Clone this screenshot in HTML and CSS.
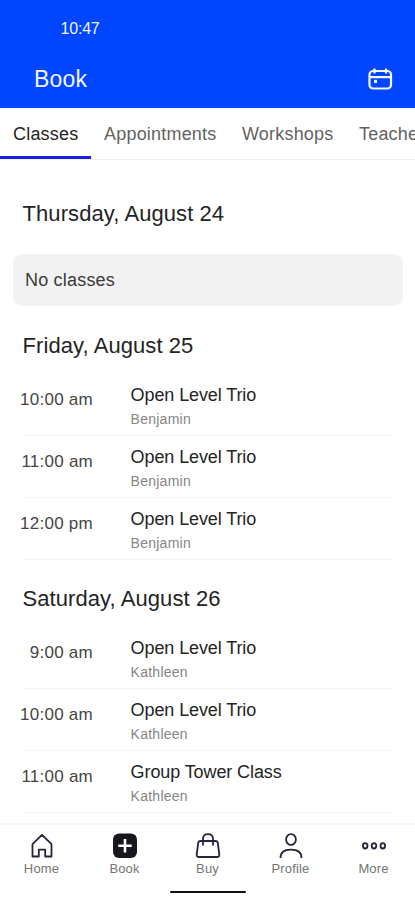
FILE: index.html
```html
<!DOCTYPE html>
<html lang="en">
<head>
<meta charset="utf-8">
<meta name="viewport" content="width=device-width, initial-scale=1">
<title>Book</title>
<link rel="stylesheet" href="styles.css">
</head>
<body>
<div class="app">
  <header class="header">
    <div class="status">10:47</div>
    <div class="titlebar">
      <h1 class="title">Book</h1>
      <svg class="calendar" width="26" height="24" viewBox="0 0 26 24" fill="none" stroke="currentColor" stroke-width="2.2">
        <rect x="2.500" y="4" width="21.500" height="17.500" rx="3.5"/>
        <path d="M2.500 10.200h21.500M7.500 1.500v5M19 1.500v5"/>
        <path d="M7 12.800h3v3.200h-3z" fill="currentColor" stroke="none"/>
      </svg>
    </div>
  </header>
  <nav class="tabs">
    <a class="tab tab-active">Classes</a>
    <a class="tab">Appointments</a>
    <a class="tab">Workshops</a>
    <a class="tab">Teachers</a>
  </nav>
  <main class="schedule">
    <h2 class="day day-first">Thursday, August 24</h2>
    <p class="empty">No classes</p>
    <h2 class="day">Friday, August 25</h2>
    <ul class="list">
      <li class="row"><time class="time">10:00 am</time><div class="info"><div class="name">Open Level Trio</div><div class="teacher">Benjamin</div></div></li>
      <li class="row"><time class="time">11:00 am</time><div class="info"><div class="name">Open Level Trio</div><div class="teacher">Benjamin</div></div></li>
      <li class="row"><time class="time">12:00 pm</time><div class="info"><div class="name">Open Level Trio</div><div class="teacher">Benjamin</div></div></li>
    </ul>
    <h2 class="day day-last">Saturday, August 26</h2>
    <ul class="list">
      <li class="row"><time class="time">9:00 am</time><div class="info"><div class="name">Open Level Trio</div><div class="teacher">Kathleen</div></div></li>
      <li class="row"><time class="time">10:00 am</time><div class="info"><div class="name">Open Level Trio</div><div class="teacher">Kathleen</div></div></li>
      <li class="row"><time class="time">11:00 am</time><div class="info"><div class="name">Group Tower Class</div><div class="teacher">Kathleen</div></div></li>
    </ul>
  </main>
  <footer class="footer">
    <nav class="menu">
      <a class="item">
        <svg class="icon" width="28" height="28" viewBox="0 0 28 28"><path d="M4.500 24.500V12.200L14 2.800l9.500 9.400v12.300h-6.300v-6.800h-6.400v6.800z"/></svg>
        <span>Home</span>
      </a>
      <a class="item">
        <svg class="icon" width="28" height="28" viewBox="0 0 28 28"><rect class="solid" x="2" y="1.500" width="24" height="24.500" rx="6"/><path class="plus" d="M14 7v13.500M7.250 13.750h13.500"/></svg>
        <span>Book</span>
      </a>
      <a class="item">
        <svg class="icon" width="28" height="28" viewBox="0 0 28 28"><path d="M6.500 9h15q2 0 2.300 2l1.500 11.300q.2 2.700-2.300 2.700H5q-2.500 0-2.300-2.700L4.200 11q.3-2 2.300-2zM9 13.500V7q0-4.800 5-4.800T19 7v6.500"/></svg>
        <span>Buy</span>
      </a>
      <a class="item">
        <svg class="icon" width="28" height="28" viewBox="0 0 28 28"><ellipse cx="14" cy="7.500" rx="4.900" ry="5.400"/><path d="M3.500 26c0-5.500 3.500-8.300 10.500-8.300S24.500 20.500 24.500 26"/></svg>
        <span>Profile</span>
      </a>
      <a class="item">
        <svg class="icon" width="28" height="28" viewBox="0 0 28 28"><ellipse cx="5.200" cy="13.800" rx="2.300" ry="2.700"/><ellipse cx="14" cy="13.800" rx="2.300" ry="2.700"/><ellipse cx="22.800" cy="13.800" rx="2.300" ry="2.700"/></svg>
        <span>More</span>
      </a>
    </nav>
    <div class="handle"></div>
  </footer>
</div>
</body>
</html>
```
FILE: styles.css
```css
* { box-sizing: border-box; }
body {
  margin: 0;
  background: #fff;
  color: #242424;
  font-family: "Liberation Sans", Arial, sans-serif;
}
h1, h2, p, ul { margin: 0; padding: 0; font-weight: 400; }
.app {
  display: flex;
  flex-direction: column;
  width: 415px;
  height: 900px;
  overflow: hidden;
}
.header {
  flex: none;
  height: 108px;
  background: #0045ff;
  color: #f4f5ff;
}
.status {
  height: 56px;
  padding-left: 60.500px;
  font-size: 16px;
  line-height: 57px;
  letter-spacing: -0.2px;
}
.titlebar {
  display: flex;
  justify-content: space-between;
  padding: 0 22px 0 34px;
}
.title {
  font-size: 23px;
  line-height: 46px;
  letter-spacing: 0.2px;
}
.calendar { margin-top: 11px; }
.tabs {
  display: flex;
  flex: none;
  height: 52px;
  border-bottom: 1px solid #f0f0f0;
}
.tab {
  flex: none;
  height: 51px;
  padding: 0 12.500px 0 13px;
  color: #626262;
  font-size: 18px;
  line-height: 52px;
  letter-spacing: 0.2px;
}
.tab-active {
  width: 91px;
  color: #242424;
  border-bottom: 3px solid #1a1fe0;
}
.schedule {
  flex: 1;
  min-height: 0;
  overflow: hidden;
}
.day {
  height: 68px;
  padding-left: 22.500px;
  font-size: 22px;
  line-height: 80px;
  letter-spacing: 0.08px;
}
.day-first { height: 94px; line-height: 108px; }
.day-last { height: 67px; line-height: 78px; }
.empty {
  height: 52px;
  margin: 0 12px 0 13px;
  padding-left: 12px;
  border-radius: 10px;
  background: #f2f2f2;
  color: #3a3a3a;
  font-size: 18px;
  line-height: 52px;
  letter-spacing: 0.2px;
}
.list {
  margin: 0 22px 0 24px;
  list-style: none;
}
.row {
  display: flex;
  height: 62px;
  border-bottom: 1px solid #f3f3f3;
}
.time {
  width: 79px;
  margin-left: -10px;
  color: #454545;
  font-size: 17px;
  line-height: 51px;
  letter-spacing: 0.25px;
  text-align: right;
}
.info { padding-left: 37.600px; }
.name {
  height: 35px;
  font-size: 18px;
  line-height: 42px;
  letter-spacing: -0.1px;
}
.teacher {
  color: #858585;
  font-size: 14px;
  line-height: 20px;
  letter-spacing: 0.25px;
}
.footer {
  flex: none;
  height: 77px;
  border-top: 2px solid #f7f7f7;
}
.menu { display: flex; height: 66px; }
.item {
  display: flex;
  flex: 1;
  flex-direction: column;
  align-items: center;
  padding-top: 7px;
  color: #747474;
  font-size: 13px;
  line-height: 17px;
  letter-spacing: 0.15px;
}
.icon {
  fill: none;
  stroke: #24243a;
  stroke-width: 1.8px;
  stroke-linejoin: round;
}
.icon .solid { fill: #17181d; stroke: none; }
.icon .plus { stroke: #fff; stroke-width: 2.600px; }
.handle {
  width: 76px;
  height: 2px;
  margin: 0 auto;
  border-radius: 1px;
  background: #111;
}
```
